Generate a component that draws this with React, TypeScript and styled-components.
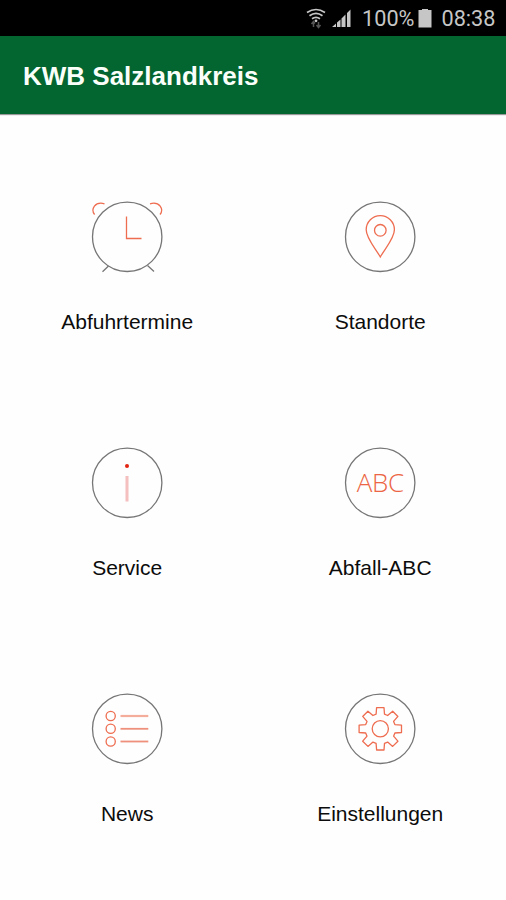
import React from "react";
import styled, { createGlobalStyle } from "styled-components";

const GlobalStyle = createGlobalStyle`
  * { box-sizing: border-box; }
  body { margin: 0; background: #fefefe; }
`;

const ACCENT = "#ee6d50";
const OUTLINE = "#767676";

const Screen = styled.div`
  display: flex;
  flex-direction: column;
  width: 100%;
  height: 900px;
  overflow: hidden;
  background: #fefefe;
  font-family: "Liberation Sans", Arial, sans-serif;
`;

const StatusBar = styled.div`
  display: flex;
  flex: none;
  align-items: center;
  justify-content: flex-end;
  height: 36px;
  padding: 2px 10.5px 0 0;
  background: #000;
  color: #c6c6c6;
  font: 400 21.7px/34px Roboto, sans-serif;
`;

const StatusIcon = styled.svg<{ $gap: number }>`
  display: block;
  flex: none;
  margin-right: ${(p) => p.$gap}px;
`;

const Header = styled.header`
  display: flex;
  flex: none;
  align-items: center;
  height: 78px;
  padding: 2px 23px 0;
  background: #036530;
  box-shadow: 0 1px 1px rgba(0, 0, 0, 0.4);
`;

const Title = styled.h1`
  margin: 0;
  color: #fafffa;
  font-size: 26px;
  line-height: 30px;
  font-weight: 700;
`;

const Menu = styled.main`
  display: grid;
  grid-template-columns: 1fr 1fr;
  grid-auto-rows: 246px;
`;

const Tile = styled.div`
  display: flex;
  flex-direction: column;
  align-items: center;
  padding-top: 76px;
`;

const TileIcon = styled.svg`
  display: block;
  flex: none;
  fill: none;
  stroke: ${ACCENT};
  stroke-width: 1.3;
`;

const IconText = styled.text`
  fill: #ec6544;
  stroke: none;
  font: 300 26px "Open Sans", sans-serif;
`;

const Label = styled.span`
  margin-top: 26px;
  padding-left: 1.4px;
  color: #0c0c0c;
  font-size: 21px;
  line-height: 24px;
`;

const AlarmIcon = () => (
  <>
    <path d="M14.6 24.5C10.4 19.5 15 11 24.5 13.8" />
    <path d="M80 24.5C84.2 19.5 79.600 11 70 13.8" />
    <path d="M46.500 26.500V48.500H61.500" />
    <path d="M28.500 76L22.500 81.800M67.500 75.500L74 81.500" stroke={OUTLINE} />
  </>
);

const PinIcon = () => (
  <>
    <path d="M47.300 67C43 59 33.200 48.500 33.200 39.800A14.100 14.100 0 0 1 61.400 39.800C61.400 48.500 51.600 59 47.300 67Z" />
    <circle cx="47.300" cy="40.300" r="5.800" />
  </>
);

const InfoIcon = () => (
  <>
    <circle cx="47" cy="30" r="2" fill="#e22412" stroke="none" />
    <path d="M47 40V65.500" stroke="#f5bfbf" strokeWidth="3" />
  </>
);

const AbcIcon = () => (
  <IconText x="23.700" y="56" textLength="47.500">ABC</IconText>
);

const ListIcon = () => (
  <>
    {[34, 46.8, 59.5].map((y, i) => (
      <React.Fragment key={y}>
        <circle cx="30.700" cy={y} r="4.600" />
        <path
          d={`M40.500 ${y}H68.300`}
          stroke={i === 0 ? "#f5ad9b" : "#ee907c"}
          strokeWidth={i === 0 ? 2.2 : 1.8}
        />
      </React.Fragment>
    ))}
  </>
);

const gearPoints = Array.from({ length: 8 }, (_, i) => {
  const a = (i * Math.PI) / 4;
  return [
    [-4.2, -14.6],
    [-3.7, -21.2],
    [3.7, -21.2],
    [4.2, -14.6],
  ]
    .map(([x, y]) => {
      const px = 47.3 + x * Math.cos(a) - y * Math.sin(a);
      const py = 46.8 + x * Math.sin(a) + y * Math.cos(a);
      return `${px.toFixed(2)},${py.toFixed(2)}`;
    })
    .join(" ");
}).join(" ");

const GearIcon = () => (
  <>
    <polygon points={gearPoints} strokeLinejoin="round" />
    <circle cx="47.300" cy="46.800" r="8.100" />
  </>
);

const items = [
  { label: "Abfuhrtermine", Icon: AlarmIcon },
  { label: "Standorte", Icon: PinIcon },
  { label: "Service", Icon: InfoIcon },
  { label: "Abfall-ABC", Icon: AbcIcon },
  { label: "News", Icon: ListIcon },
  { label: "Einstellungen", Icon: GearIcon },
];

const Percent = styled.span`
  margin-right: 4px;
`;

export default function App() {
  return (
    <Screen>
      <GlobalStyle />
      <StatusBar>
        <StatusIcon $gap={6} width="20" height="22" viewBox="0 0 20 22" fill="none" stroke="#c6c6c6" strokeWidth="1.700">
          <path d="M1 4.500Q10-1.500 19 4.500M3.500 7.700Q10 3 16.500 7.700M6 10.800Q10 8 14 10.800" />
          <circle cx="10" cy="12.800" r="1.400" fill="#c6c6c6" stroke="none" />
          <path d="M7.500 19V14M5.500 16L7.500 13.500L9 15.500M12.500 14V19M10.500 17L12.500 19.500L14.500 17" stroke="#555" strokeWidth="1.500" />
        </StatusIcon>
        <StatusIcon $gap={11} width="19" height="20" viewBox="0 0 19 20" fill="#c6c6c6">
          <path d="M0 18L4 14.500V18ZM5 13.500L8.500 10.500V18H5ZM9.500 9.500L13.500 5.500V18H9.500ZM15 4L18.500 0.500V18H15Z" />
        </StatusIcon>
        <Percent>100%</Percent>
        <StatusIcon $gap={9} width="14" height="20" viewBox="0 0 14 20" fill="#c6c6c6">
          <path d="M4 -1H10V1H13.500V18.500H0.500V1H4Z" />
        </StatusIcon>
        <span>08:38</span>
      </StatusBar>
      <Header>
        <Title>KWB Salzlandkreis</Title>
      </Header>
      <Menu>
        {items.map(({ label, Icon }) => (
          <Tile key={label}>
            <TileIcon width="94" height="94" viewBox="0 0 94 94">
              <circle cx="47.200" cy="46.800" r="34.700" stroke={OUTLINE} />
              <Icon />
            </TileIcon>
            <Label>{label}</Label>
          </Tile>
        ))}
      </Menu>
    </Screen>
  );
}
